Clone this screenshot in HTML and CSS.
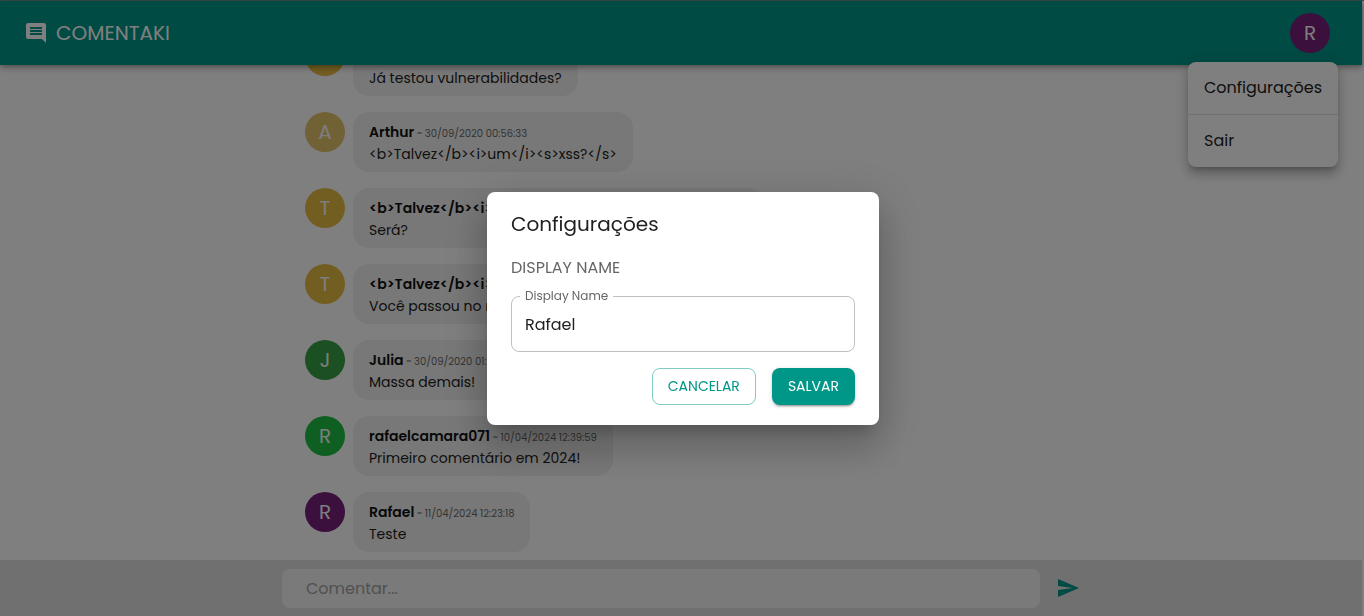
FILE: index.html
```html
<!DOCTYPE html>
<html lang="pt-BR">
<head>
<meta charset="utf-8">
<meta name="viewport" content="width=device-width, initial-scale=1">
<title>Comentaki</title>
<link rel="stylesheet" href="styles.css">
</head>
<body>
<div class="app">
  <header class="topbar">
    <svg class="icon" viewBox="0 0 24 24" aria-hidden="true"><path d="M21.99 4c0-1.1-.89-2-1.99-2H4c-1.100 0-2 .9-2 2v12c0 1.100.9 2 2 2h14l4 4-.01-18zM18 14H6v-2h12v2zm0-3H6V9h12v2zm0-3H6V6h12v2z"/></svg>
    <h1 class="brand">COMENTAKI</h1>
    <div class="account">
      <button class="avatar avatar-purple" type="button" aria-haspopup="menu" aria-expanded="true">R</button>
      <div class="menu" role="menu">
        <button class="menu-item" type="button" role="menuitem">Configurações</button>
        <button class="menu-item" type="button" role="menuitem">Sair</button>
      </div>
    </div>
  </header>

  <main class="messages">
    <article class="message">
      <span class="avatar avatar-gold">T</span>
      <div class="bubble"><p><strong class="author">Thiago</strong> <time class="time">~ 30/09/2020</time></p><p>Já testou vulnerabilidades?</p></div>
    </article>
    <article class="message">
      <span class="avatar avatar-sand">A</span>
      <div class="bubble"><p><strong class="author">Arthur</strong><time class="time"> ~ 30/09/2020 00:56:33</time></p><p>&lt;b&gt;Talvez&lt;/b&gt;&lt;i&gt;um&lt;/i&gt;&lt;s&gt;xss?&lt;/s&gt;</p></div>
    </article>
    <article class="message">
      <span class="avatar avatar-gold">T</span>
      <div class="bubble"><p><strong class="author">&lt;b&gt;Talvez&lt;/b&gt;&lt;i&gt;um&lt;/i&gt;&lt;s&gt;xss??&lt;/s&gt;</strong><time class="time"> ~ 30/09/2020 00:58:44</time></p><p>Será?</p></div>
    </article>
    <article class="message">
      <span class="avatar avatar-gold">T</span>
      <div class="bubble"><p><strong class="author">&lt;b&gt;Talvez&lt;/b&gt;&lt;i&gt;</strong></p><p>Você passou no meu teste</p></div>
    </article>
    <article class="message">
      <span class="avatar avatar-green">J</span>
      <div class="bubble"><p><strong class="author">Julia</strong><time class="time"> ~ 30/09/2020 01:02:10</time></p><p>Massa demais!</p></div>
    </article>
    <article class="message">
      <span class="avatar avatar-lime">R</span>
      <div class="bubble"><p><strong class="author">rafaelcamara071</strong><time class="time"> ~ 10/04/2024 12:39:59</time></p><p>Primeiro comentário em 2024!</p></div>
    </article>
    <article class="message">
      <span class="avatar avatar-purple">R</span>
      <div class="bubble"><p><strong class="author">Rafael</strong><time class="time"> ~ 11/04/2024 12:23:18</time></p><p>Teste</p></div>
    </article>
  </main>

  <footer class="composer">
    <form class="composer-form">
      <input class="composer-input" type="text" placeholder="Comentar..." aria-label="Comentar">
      <button class="send" type="button" aria-label="Enviar">
        <svg class="icon" viewBox="0 0 24 24" aria-hidden="true"><path d="M2.01 21L23 12 2.01 3 2 10l15 2-15 2z"/></svg>
      </button>
    </form>
  </footer>
</div>

<div class="backdrop">
  <form class="dialog" role="dialog" aria-modal="true" aria-labelledby="dialog-title">
    <h2 class="dialog-title" id="dialog-title">Configurações</h2>
    <p class="dialog-section">DISPLAY NAME</p>
    <fieldset class="field">
      <legend class="field-legend"><label for="display-name">Display Name</label></legend>
      <input class="field-input" id="display-name" type="text" value="Rafael">
    </fieldset>
    <div class="actions">
      <button class="button button-outlined" type="button">CANCELAR</button>
      <button class="button button-filled" type="button">SALVAR</button>
    </div>
  </form>
</div>
</body>
</html>
```
FILE: styles.css
```css
* {
  box-sizing: border-box;
}

html,
body {
  height: 100%;
}

body,
h1,
h2,
p {
  margin: 0;
}

body {
  overflow: hidden;
  background: #ffffff;
  color: #212121;
  font-family: Poppins, Inter, "Open Sans", sans-serif;
  font-size: 16px;
  line-height: 24px;
}

button,
input {
  font: inherit;
  color: inherit;
  border: 0;
  margin: 0;
}

.app {
  display: flex;
  flex-direction: column;
  height: 100%;
  padding-right: 2px;
  border-top: 1px solid #70908c;
}

.icon {
  display: block;
  width: 24px;
  height: 24px;
  fill: currentColor;
}

.topbar {
  position: relative;
  z-index: 1;
  flex: none;
  display: flex;
  align-items: center;
  gap: 8px;
  height: 64px;
  padding: 0 32px 0 24px;
  background: #009688;
  color: #ffffff;
  box-shadow: 0 2px 4px -1px rgba(0, 0, 0, 0.2), 0 4px 5px rgba(0, 0, 0, 0.14), 0 1px 10px rgba(0, 0, 0, 0.12);
}

.brand {
  font-size: 20px;
  line-height: 32px;
  font-weight: 400;
}

.account {
  position: relative;
  margin-left: auto;
}

.avatar {
  flex: none;
  display: flex;
  align-items: center;
  justify-content: center;
  width: 40px;
  height: 40px;
  padding: 0;
  border-radius: 50%;
  color: #fafafa;
  font-size: 20px;
}

.avatar-purple { background: #77217b; }
.avatar-gold { background: #e6bd45; }
.avatar-sand { background: #e0c468; }
.avatar-green { background: #36a046; }
.avatar-lime { background: #1cbf43; }

.menu {
  position: absolute;
  top: 49px;
  right: -8px;
  width: 150px;
  border-radius: 8px;
  background: #ffffff;
  color: #212121;
  box-shadow: 0 5px 5px -3px rgba(0, 0, 0, 0.2), 0 8px 10px 1px rgba(0, 0, 0, 0.14), 0 3px 14px 2px rgba(0, 0, 0, 0.12);
}

.menu-item {
  display: block;
  width: 100%;
  height: 52px;
  padding: 0 16px;
  background: none;
  text-align: left;
}

.menu-item + .menu-item {
  height: 53px;
  border-top: 1px solid #e0e0e0;
}

.messages {
  flex: 1;
  min-height: 0;
  display: flex;
  flex-direction: column;
  justify-content: flex-end;
  gap: 16px;
  width: 100%;
  max-width: 800px;
  margin: 0 auto;
  padding: 0 24px 8px;
  overflow: hidden;
}

.message {
  flex: none;
  display: flex;
  gap: 8px;
}

.bubble {
  padding: 9px 16px 7px;
  border-radius: 16px;
  background: #f0f0f0;
  font-size: 14px;
  line-height: 22px;
}

.time {
  color: #6a6a6a;
  font-size: 10px;
  line-height: 16px;
}

.author {
  color: #111111;
  font-weight: 600;
}

.composer {
  flex: none;
  padding: 9px 0 8px;
  background: #e0e0e0;
}

.composer-form {
  display: flex;
  align-items: center;
  gap: 16px;
  max-width: 798px;
  margin: 0 auto;
}

.composer-input {
  flex: 1;
  min-width: 0;
  height: 39px;
  padding: 0 24px;
  border-radius: 8px;
  background: #f5f5f5;
}

.composer-input::placeholder {
  color: #a2a2a2;
  opacity: 1;
}

.send {
  padding: 0 0 2px;
  background: none;
  color: #009688;
}

.backdrop {
  position: fixed;
  inset: 0;
  z-index: 2;
  display: flex;
  align-items: center;
  justify-content: center;
  padding: 1px 0 0 2px;
  background: rgba(0, 0, 0, 0.5);
}

.dialog {
  width: 392px;
  padding: 16px 24px 20px;
  border-radius: 8px;
  background: #ffffff;
  box-shadow: 0 11px 15px -7px rgba(0, 0, 0, 0.2), 0 24px 38px 3px rgba(0, 0, 0, 0.14), 0 9px 46px 8px rgba(0, 0, 0, 0.12);
}

.dialog-title {
  font-size: 20px;
  line-height: 32px;
  font-weight: 400;
}

.dialog-section {
  margin: 16px 0 8px;
  color: #666666;
}

.field {
  min-width: 0;
  margin: 0;
  padding: 0 13px;
  border: 1px solid #c0c0c0;
  border-radius: 8px;
}

.field-legend {
  margin-left: -5px;
  padding: 0 5px;
  color: #666666;
  font-size: 12px;
  line-height: 16px;
}

.field-input {
  display: block;
  width: 100%;
  height: 47px;
  padding: 0 0 6px;
  background: none;
  outline: 0;
}

.actions {
  display: flex;
  justify-content: flex-end;
  gap: 16px;
  margin-top: 16px;
}

.button {
  height: 37px;
  padding: 0 15px 2px;
  border-radius: 8px;
  font-size: 14px;
}

.button-outlined {
  border: 1px solid #80cbc4;
  background: none;
  color: #009688;
}

.button-filled {
  padding: 0 16px 2px;
  background: #009688;
  color: #ffffff;
  box-shadow: 0 3px 1px -2px rgba(0, 0, 0, 0.2), 0 2px 2px rgba(0, 0, 0, 0.14), 0 1px 5px rgba(0, 0, 0, 0.12);
}
```
